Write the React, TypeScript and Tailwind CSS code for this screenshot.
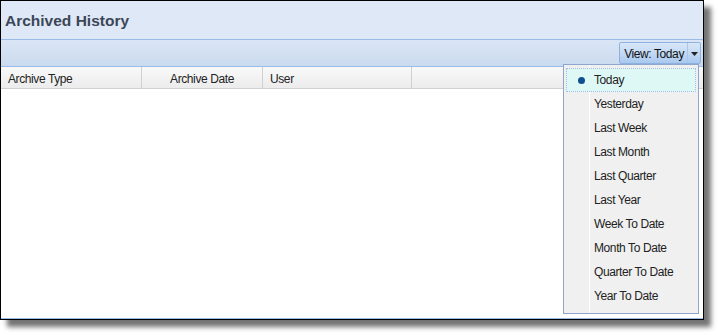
const items = [
  "Today",
  "Yesterday",
  "Last Week",
  "Last Month",
  "Last Quarter",
  "Last Year",
  "Week To Date",
  "Month To Date",
  "Quarter To Date",
  "Year To Date",
];

const App = () => {
  return (
    <div className="relative w-[718px] h-[335px] bg-white font-['Liberation_Sans',Arial,sans-serif] text-[12px] tracking-[-0.4px] text-[#222]">
      <div className="w-[704px] h-[320px] border border-black flex flex-col bg-white shadow-[7px_7px_5px_rgba(0,0,0,0.55)]">
        <div className="h-[39px] shrink-0 bg-[#dfe8f6] border-b border-[#99bbe8] flex items-center pl-[4px]">
          <h1 className="text-[15.5px] font-bold tracking-normal text-[#3b4656] mt-[1px]">Archived History</h1>
        </div>
        <div className="h-[27px] shrink-0 bg-gradient-to-b from-[#dae6f5] to-[#cbdaee] border-b border-[#99bbe8] flex justify-end items-center pr-[2px]">
          <div className="h-[22px] flex items-stretch border border-[#8eb2df] rounded-[2px] bg-gradient-to-b from-[#d9e7f8] via-[#c3d9f3] to-[#a9c8ef]">
            <span className="pl-[4px] pr-[3px] pt-[2px] flex items-center text-[#111]">View: Today</span>
            <span className="w-[13px] border-l border-[#a9c5e8] flex items-center justify-center pt-[1px]">
              <svg width="7" height="4" viewBox="0 0 7 4">
                <path d="M0 0h7L3.5 4z" fill="#222" />
              </svg>
            </span>
          </div>
        </div>
        <div className="h-[22px] shrink-0 flex bg-gradient-to-b from-[#f9f9f9] to-[#ececec] border-b border-[#d0d0d0]">
          <div className="w-[141px] border-r border-[#d0d0d0] flex items-center pl-[7px] pt-[2px]">Archive Type</div>
          <div className="w-[121px] border-r border-[#d0d0d0] flex items-center justify-center pt-[2px]">Archive Date</div>
          <div className="w-[149px] border-r border-[#d0d0d0] flex items-center pl-[7px] pt-[2px]">User</div>
          <div className="flex-1" />
        </div>
        <div className="flex-1 border-b border-[#99bbe8]" />
      </div>

      <div className="absolute left-[563px] top-[64px] w-[136px] h-[250px] bg-[#f0f0f0] border border-[#8ea6cc] pt-[3px] px-[2px]">
        <div className="absolute left-[25px] top-0 bottom-0 w-[1px] bg-[#e0e0e0] border-r border-white" />
        {items.map((label, i) => (
          <div
            key={label}
            className={
              i === 0
                ? "relative h-[24px] flex items-center bg-[#def8f5] border border-dotted border-[#a6bde8]"
                : "relative h-[24px] flex items-center border border-transparent"
            }
          >
            <span className="w-[27px] flex justify-center">
              {i === 0 && <span className="w-[7px] h-[7px] rounded-full bg-[#0f4f8f] ml-[2px]" />}
            </span>
            <span className="text-[#222]">{label}</span>
          </div>
        ))}
      </div>
    </div>
  );
};

export default App;
